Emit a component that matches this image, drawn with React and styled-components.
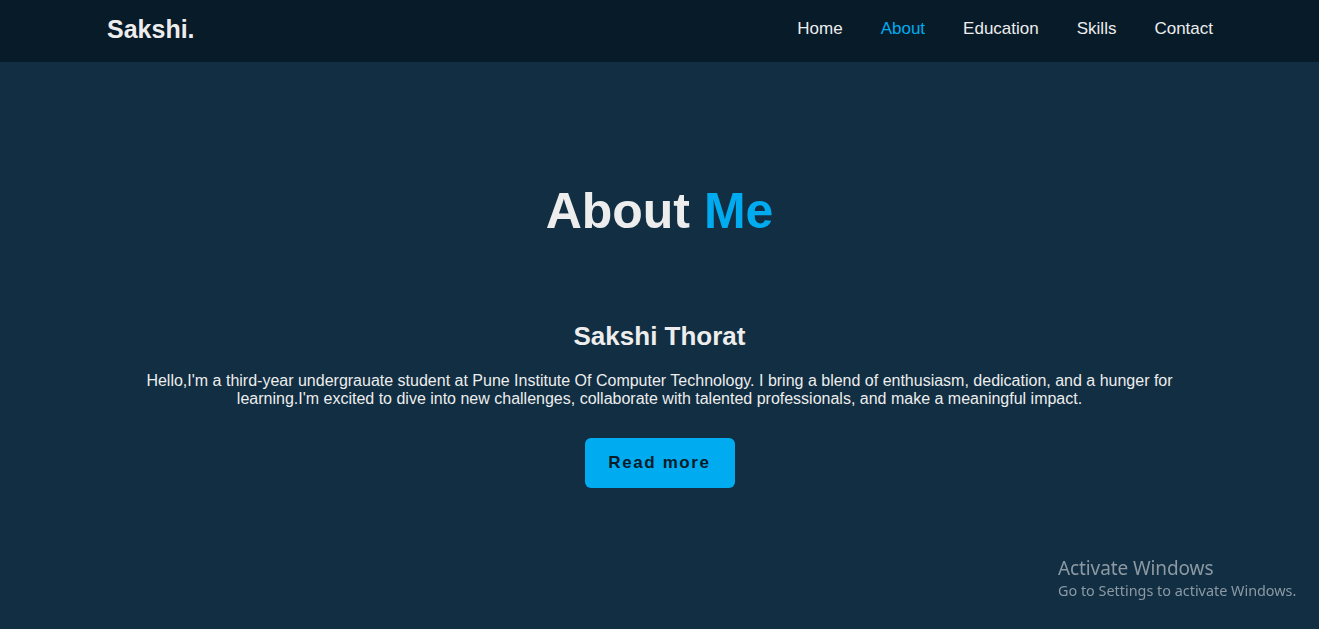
import React from 'react';
import styled, { createGlobalStyle } from 'styled-components';

const GlobalStyle = createGlobalStyle`
  * {
    margin: 0;
    padding: 0;
    box-sizing: border-box;
  }
  body {
    background: #112e42;
    color: #ededed;
    font-family: "Liberation Sans", Arial, sans-serif;
    overflow: hidden;
  }
`;

const Header = styled.header`
  height: 62px;
  background: #081b29;
  display: flex;
  align-items: center;
  justify-content: space-between;
  padding: 0 106px 0 107px;
`;

const Logo = styled.a`
  font-size: 25px;
  font-weight: 700;
  color: #ededed;
  text-decoration: none;
  margin-top: -4px;
`;

const Nav = styled.nav`
  display: flex;
  gap: 38px;
  margin-top: -4px;
`;

const NavLink = styled.a`
  font-size: 17px;
  color: ${({ active }) => (active ? '#00abf0' : '#ededed')};
  text-decoration: none;
`;

const Section = styled.section`
  display: flex;
  flex-direction: column;
  align-items: center;
  padding: 121px 107px 0;
  text-align: center;
`;

const Heading = styled.h2`
  font-size: 50px;
  font-weight: 700;
  line-height: 1.15;
  color: #ededed;

  span {
    color: #00abf0;
  }
`;

const Name = styled.h3`
  font-size: 26px;
  font-weight: 700;
  line-height: 1.15;
  margin-top: 81px;
`;

const Text = styled.p`
  font-size: 16px;
  line-height: 18px;
  margin-top: 21px;
`;

const Button = styled.a`
  display: inline-flex;
  align-items: center;
  justify-content: center;
  width: 150px;
  height: 50px;
  margin-top: 30px;
  background: #00abf0;
  border-radius: 6px;
  color: #081b29;
  font-size: 17px;
  font-weight: 700;
  letter-spacing: 1.6px;
  text-decoration: none;
`;

const Watermark = styled.div`
  position: fixed;
  left: 1058px;
  top: 557px;
  font-family: "Noto Sans", "Open Sans", sans-serif;
  color: #8c99a3;
  line-height: 1.2;
`;

const WatermarkTitle = styled.div`
  font-size: 19px;
  letter-spacing: -0.1px;
`;

const WatermarkSub = styled.div`
  font-size: 14.4px;
  margin-top: 2px;
`;

const links = ['Home', 'About', 'Education', 'Skills', 'Contact'];

export default function App() {
  return (
    <>
      <GlobalStyle />
      <Header>
        <Logo href="#">Sakshi.</Logo>
        <Nav>
          {links.map((l) => (
            <NavLink key={l} href="#" active={l === 'About' ? 1 : 0}>
              {l}
            </NavLink>
          ))}
        </Nav>
      </Header>
      <Section id="about">
        <Heading>
          About <span>Me</span>
        </Heading>
        <Name>Sakshi Thorat</Name>
        <Text>
          Hello,I'm a third-year undergrauate student at Pune Institute Of Computer Technology. I bring a blend of
          enthusiasm, dedication, and a hunger for learning.I'm excited to dive into new challenges, collaborate with
          talented professionals, and make a meaningful impact.
        </Text>
        <Button href="#">Read more</Button>
      </Section>
      <Watermark>
        <WatermarkTitle>Activate Windows</WatermarkTitle>
        <WatermarkSub>Go to Settings to activate Windows.</WatermarkSub>
      </Watermark>
    </>
  );
}
